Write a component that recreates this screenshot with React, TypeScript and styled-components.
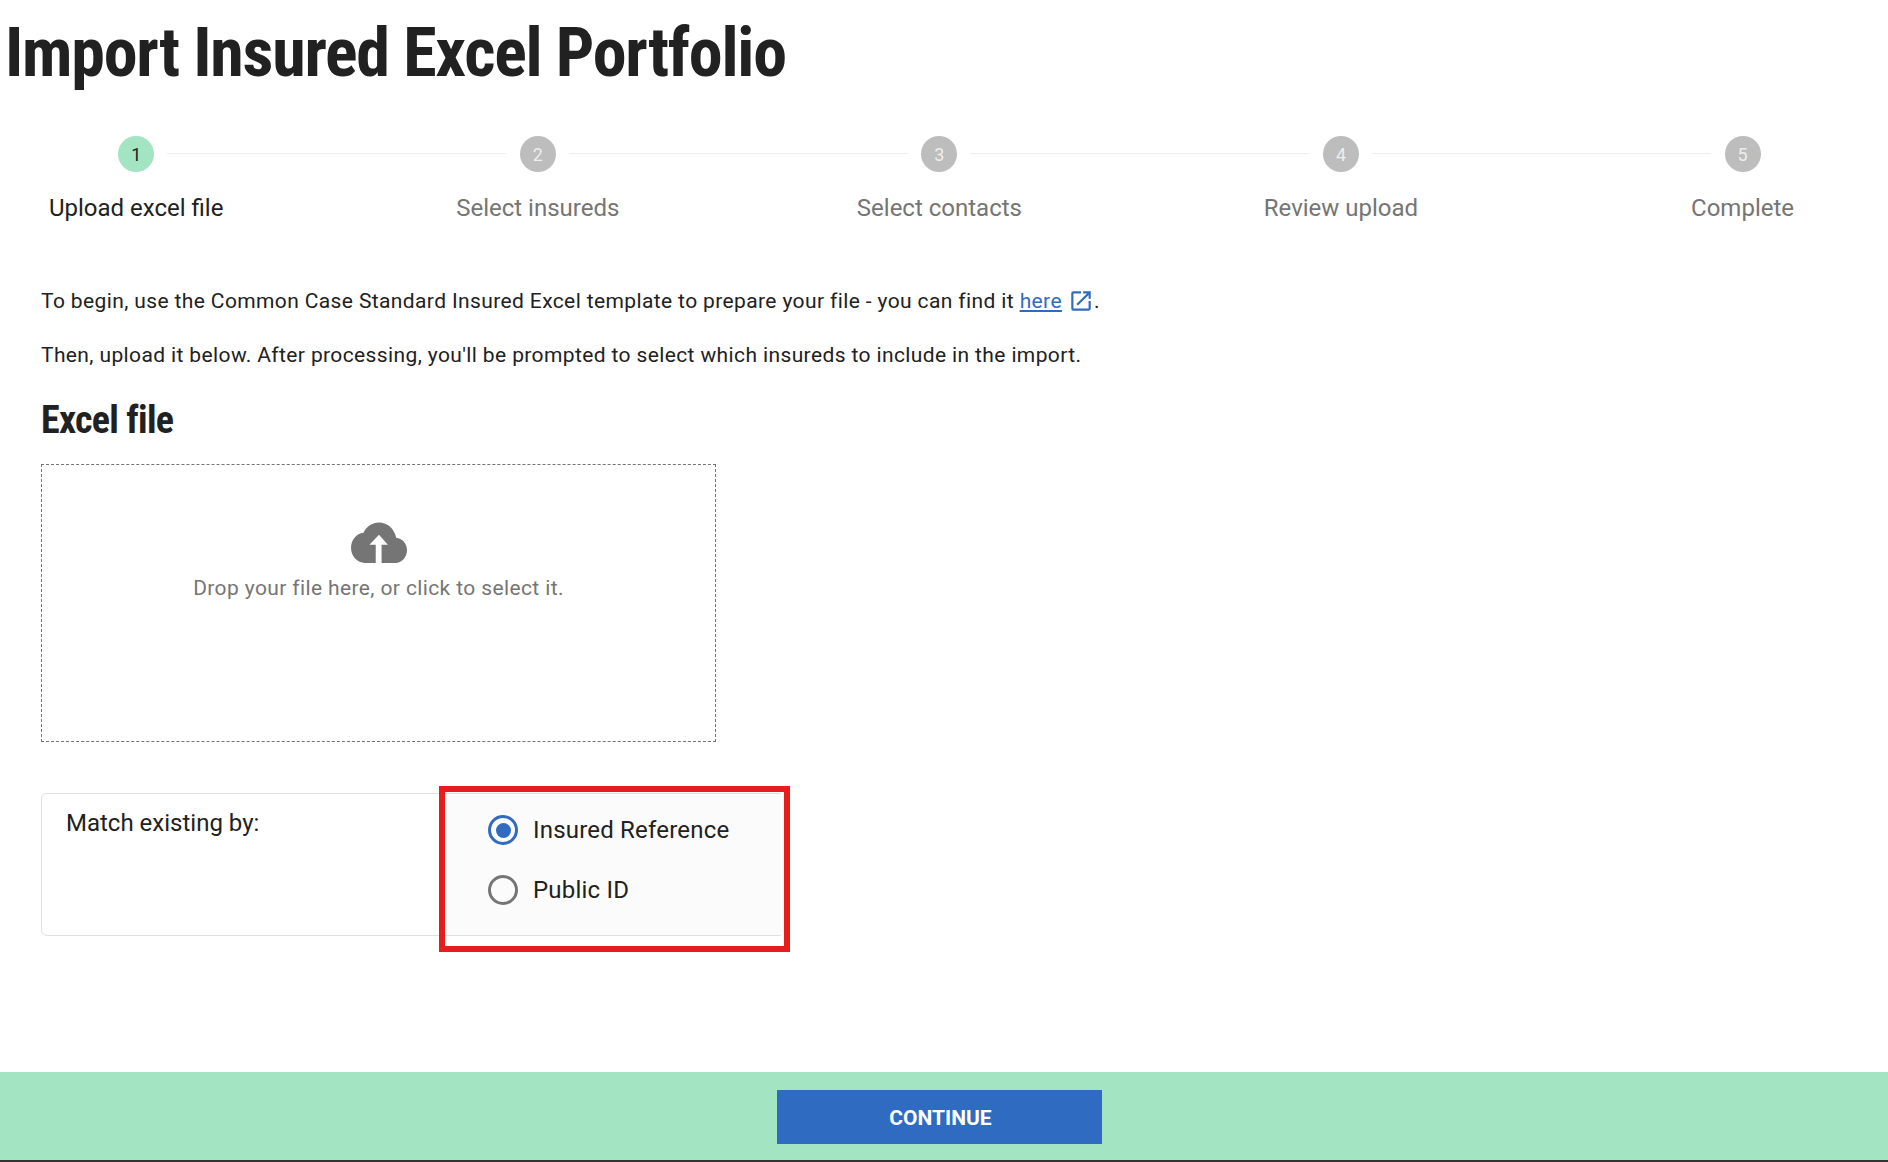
import React from "react";
import styled, { createGlobalStyle } from "styled-components";

const GlobalStyle = createGlobalStyle`
  html, body {
    margin: 0;
    padding: 0;
    background: #fff;
    font-family: Roboto, "Liberation Sans", sans-serif;
    color: #212121;
  }
`;

const Page = styled.div`
  min-height: 1162px;
  display: flex;
  flex-direction: column;
`;

const Title = styled.h1`
  margin: 0;
  padding: 13px 0 0 5px;
  height: 99px;
  box-sizing: border-box;
  font-size: 68px;
  line-height: 80px;
  font-weight: 700;
  font-stretch: 75%;
  letter-spacing: -1.25px;
  color: #212121;
  white-space: nowrap;
`;

const Stepper = styled.div`
  display: grid;
  grid-template-columns: repeat(5, 200px);
  column-gap: 201.6px;
  padding: 37px 0 0 36.2px;
`;

const Step = styled.div`
  position: relative;
  display: flex;
  flex-direction: column;
  align-items: center;
`;

const Connector = styled.div`
  position: absolute;
  top: 17px;
  left: 131px;
  width: 339px;
  height: 1px;
  background: #eeeeee;
`;

const StepCircle = styled.div<{ $active: boolean }>`
  width: 36px;
  height: 36px;
  border-radius: 50%;
  display: flex;
  align-items: center;
  justify-content: center;
  font-size: 18px;
  background: ${(props) => (props.$active ? "#a3e4c3" : "#bdbdbd")};
  color: ${(props) => (props.$active ? "#212121" : "#eeeeee")};
`;

const StepLabel = styled.div<{ $active: boolean }>`
  margin-top: 22px;
  font-size: 24px;
  line-height: 28px;
  white-space: nowrap;
  color: ${(props) => (props.$active ? "#212121" : "#757575")};
`;

const Content = styled.div`
  padding: 65px 0 0 41px;
`;

const Paragraph = styled.p`
  margin: 0 0 26px;
  font-size: 21px;
  line-height: 28px;
  letter-spacing: 0.38px;
  color: #212121;
`;

const Link = styled.a`
  color: #2f6bc1;
  text-decoration: underline;
`;

const ExternalIcon = styled.svg`
  width: 26px;
  height: 26px;
  margin-left: 6px;
  vertical-align: -6px;
  color: #2f6bc1;
`;

const SectionTitle = styled.h2`
  margin: 0;
  padding-top: 3px;
  font-size: 38px;
  line-height: 44px;
  font-weight: 700;
  font-stretch: 75%;
  letter-spacing: -0.7px;
  color: #212121;
`;

const DropZone = styled.div`
  box-sizing: border-box;
  width: 675px;
  height: 278px;
  margin-top: 22px;
  border: 1px dashed #757575;
  display: flex;
  flex-direction: column;
  align-items: center;
  padding-top: 57px;
`;

const CloudIcon = styled.svg`
  width: 56px;
  height: 42px;
  color: #757575;
`;

const DropText = styled.div`
  margin-top: 10px;
  font-size: 21px;
  line-height: 28px;
  letter-spacing: 0.38px;
  color: #757575;
`;

const MatchBox = styled.div`
  position: relative;
  box-sizing: border-box;
  width: 744px;
  height: 143px;
  margin-top: 51px;
  border: 1px solid #e0e0e0;
  border-radius: 6px;
  display: flex;
`;

const MatchLabel = styled.div`
  width: 403px;
  padding: 14px 0 0 24px;
  box-sizing: border-box;
  font-size: 24px;
  line-height: 30px;
`;

const RadioColumn = styled.div`
  flex: 1;
  background: #fbfbfb;
  display: flex;
  flex-direction: column;
  gap: 28px;
  padding: 20px 0 0 43px;
`;

const RadioRow = styled.label`
  display: flex;
  align-items: center;
  gap: 15px;
  height: 32px;
  font-size: 24px;
  letter-spacing: 0.2px;
`;

const RadioMark = styled.span<{ $checked: boolean }>`
  box-sizing: border-box;
  width: 30px;
  height: 30px;
  border-radius: 50%;
  border: 3px solid ${(props) => (props.$checked ? "#2f6bc1" : "#757575")};
  display: flex;
  align-items: center;
  justify-content: center;
  &::after {
    content: "";
    width: 15px;
    height: 15px;
    border-radius: 50%;
    background: ${(props) => (props.$checked ? "#2f6bc1" : "transparent")};
  }
`;

const Highlight = styled.div`
  position: absolute;
  box-sizing: border-box;
  left: 397px;
  top: -8px;
  width: 351px;
  height: 166px;
  border: 6px solid #e91c1c;
  pointer-events: none;
`;

const Footer = styled.div`
  margin-top: auto;
  height: 90px;
  box-sizing: border-box;
  background: #a3e4c3;
  border-bottom: 2px solid #333333;
  display: flex;
  justify-content: center;
  padding: 18px 9px 0 0;
`;

const ContinueButton = styled.button`
  width: 325px;
  height: 54px;
  border: none;
  padding: 1px 0 0 2px;
  background: #2f6bc1;
  color: #fff;
  font-family: Roboto, sans-serif;
  font-size: 21px;
  font-weight: 700;
  text-transform: uppercase;
`;

const STEPS = [
  "Upload excel file",
  "Select insureds",
  "Select contacts",
  "Review upload",
  "Complete",
];

function App() {
  return (
    <Page>
      <GlobalStyle />
      <Title>Import Insured Excel Portfolio</Title>
      <Stepper>
        {STEPS.map((step, idx) => (
          <Step key={step}>
            {idx < STEPS.length - 1 && <Connector />}
            <StepCircle $active={idx === 0}>{idx + 1}</StepCircle>
            <StepLabel $active={idx === 0}>{step}</StepLabel>
          </Step>
        ))}
      </Stepper>
      <Content>
        <Paragraph>
          To begin, use the Common Case Standard Insured Excel template to
          prepare your file - you can find it <Link href="#">here</Link>
          <ExternalIcon viewBox="0 0 24 24" fill="currentColor">
            <path d="M19 19H5V5h7V3H5a2 2 0 0 0-2 2v14a2 2 0 0 0 2 2h14c1.1 0 2-.9 2-2v-7h-2v7zM14 3v2h3.59l-9.83 9.83 1.41 1.41L19 6.41V10h2V3h-7z" />
          </ExternalIcon>
          .
        </Paragraph>
        <Paragraph>
          Then, upload it below. After processing, you'll be prompted to select
          which insureds to include in the import.
        </Paragraph>
        <SectionTitle>Excel file</SectionTitle>
        <DropZone>
          <CloudIcon viewBox="0 3.8 24 16.6" preserveAspectRatio="none" fill="currentColor">
            <path d="M19.35 10.04C18.67 6.59 15.64 4 12 4 9.11 4 6.6 5.64 5.35 8.04 2.34 8.36 0 10.91 0 14c0 3.31 2.69 6 6 6h4.6V12.8H7.9L12 8.8l3.8 4h-2.7V20H19c2.76 0 5-2.24 5-5 0-2.64-2.05-4.78-4.65-4.96z" />
          </CloudIcon>
          <DropText>Drop your file here, or click to select it.</DropText>
        </DropZone>
        <MatchBox>
          <MatchLabel>Match existing by:</MatchLabel>
          <RadioColumn>
            <RadioRow>
              <RadioMark $checked />
              Insured Reference
            </RadioRow>
            <RadioRow>
              <RadioMark $checked={false} />
              Public ID
            </RadioRow>
          </RadioColumn>
          <Highlight />
        </MatchBox>
      </Content>
      <Footer>
        <ContinueButton>Continue</ContinueButton>
      </Footer>
    </Page>
  );
}

export default App;
